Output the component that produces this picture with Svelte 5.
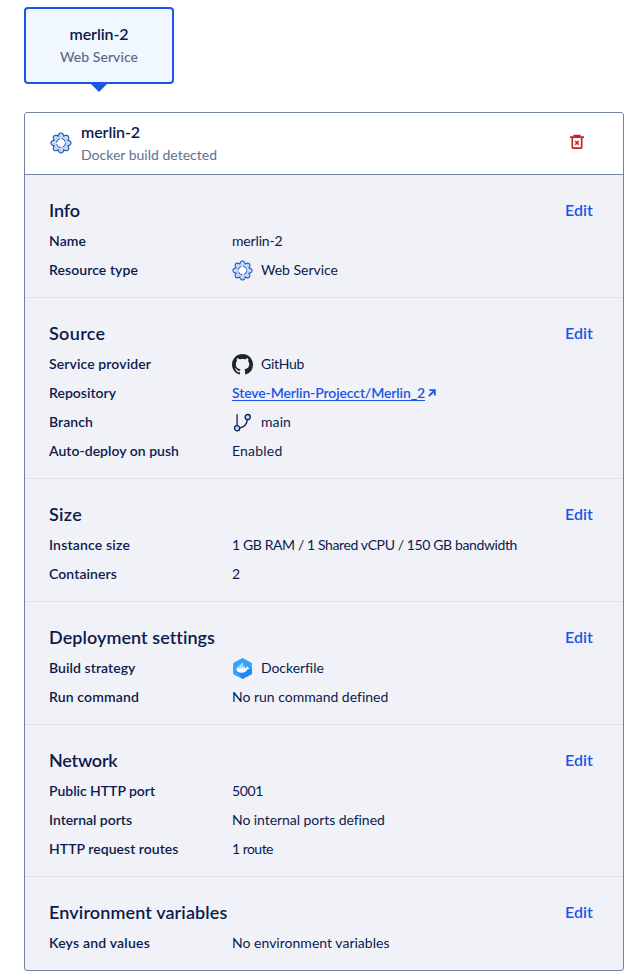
<script>
  const sections = [
    { title: 'Info', tw: 31, rows: [
      { label: 'Name', lw: 37, value: 'merlin-2', vw: 50.5 },
      { label: 'Resource type', lw: 89, value: 'Web Service', vw: 77, icon: 'gear' }
    ] },
    { title: 'Source', tw: 56.5, rows: [
      { label: 'Service provider', lw: 102, value: 'GitHub', vw: 43, icon: 'github' },
      { label: 'Repository', lw: 67, value: 'Steve-Merlin-Projecct/Merlin_2', vw: 193, link: true },
      { label: 'Branch', lw: 44, value: 'main', vw: 30, icon: 'branch' },
      { label: 'Auto-deploy on push', lw: 130, value: 'Enabled', vw: 50.5 }
    ] },
    { title: 'Size', tw: 33, rows: [
      { label: 'Instance size', lw: 81, value: '1 GB RAM / 1 Shared vCPU / 150 GB bandwidth', vw: 285 },
      { label: 'Containers', lw: 68, value: '2', vw: 8 }
    ] },
    { title: 'Deployment settings', tw: 165.5, rows: [
      { label: 'Build strategy', lw: 86.5, value: 'Dockerfile', vw: 62.5, icon: 'docker' },
      { label: 'Run command', lw: 90, value: 'No run command defined', vw: 156 }
    ] },
    { title: 'Network', tw: 68.5, rows: [
      { label: 'Public HTTP port', lw: 106, value: '5001', vw: 31 },
      { label: 'Internal ports', lw: 83, value: 'No internal ports defined', vw: 152.5 },
      { label: 'HTTP request routes', lw: 129.5, value: '1 route', vw: 41 }
    ] },
    { title: 'Environment variables', tw: 178.5, rows: [
      { label: 'Keys and values', lw: 101, value: 'No environment variables', vw: 157.5 }
    ] }
  ];

  // Tracks the text out or in so that it spans the given width.
  function fit(node, width) {
    const natural = node.getBoundingClientRect().width;
    const spacing = (width - natural) / node.textContent.length;
    node.style.letterSpacing = `${spacing.toFixed(3)}px`;
  }

  // Outline of the eight-lobed cog: round lobes with notches between.
  const cog = Array.from({ length: 128 }, (_, i) => {
    const a = (i / 128) * Math.PI * 2;
    const r = 7.2 + 2.8 * Math.pow(Math.abs(Math.cos(4 * a)), 0.85);
    return `${(11 + r * Math.sin(a)).toFixed(2)},${(11 - r * Math.cos(a)).toFixed(2)}`;
  }).join(' ');
</script>

{#snippet gear(size)}
  <svg width={size} height={size} viewBox="0 0 22 22" aria-hidden="true">
    <polygon points={cog} fill="#c0d9fb" stroke="#2450b0" stroke-width="1.1" stroke-linejoin="round" />
    <circle cx="11" cy="11" r="4.5" fill="#fff" stroke="#2450a8" stroke-width="1" stroke-dasharray="5.4 1.67" />
  </svg>
{/snippet}

<main>
  <div class="tab">
    <strong><span use:fit={59}>merlin-2</span></strong>
    <small><span use:fit={78}>Web Service</span></small>
  </div>

  <div class="card">
    <header>
      <span class="gear">{@render gear(22)}</span>
      <div class="heading">
        <strong><span use:fit={59}>merlin-2</span></strong>
        <small><span use:fit={136}>Docker build detected</span></small>
      </div>
      <svg class="trash" width="14" height="16" viewBox="0 0 14 16" fill="none" stroke="#cf2020" aria-hidden="true">
        <path d="M0 3.1h14M4.3 2.7V1.6h5.4v1.1" stroke-width="1.7" />
        <path d="M2.3 3.5v9.7q0 1 1 1h7.4q1 0 1-1V3.5" stroke-width="1.7" />
        <path d="M5.2 7l3.6 3.8M8.8 7L5.2 10.8" stroke-width="1.6" />
      </svg>
    </header>

    {#each sections as section}
      <section>
        <div class="title">
          <h2><span use:fit={section.tw}>{section.title}</span></h2>
          <a class="edit" href="#edit"><span use:fit={28}>Edit</span></a>
        </div>
        {#each section.rows as row}
          <div class="row">
            <div class="label"><span use:fit={row.lw}>{row.label}</span></div>
            <div class="value">
              {#if row.icon}
                <span class="icon">
                  {#if row.icon === 'gear'}
                    {@render gear(21)}
                  {:else if row.icon === 'github'}
                    <svg width="21" height="21" viewBox="0 0 16 16" aria-hidden="true">
                      <path fill="#20242c" d="M8 0C3.58 0 0 3.58 0 8c0 3.54 2.29 6.53 5.47 7.59.4.07.55-.17.55-.38 0-.19-.01-.82-.01-1.49-2.01.37-2.53-.49-2.69-.94-.09-.23-.48-.94-.82-1.13-.28-.15-.68-.52-.01-.53.63-.01 1.08.58 1.23.82.72 1.21 1.87.87 2.33.66.07-.52.28-.87.51-1.07-1.78-.2-3.64-.89-3.64-3.95 0-.87.31-1.59.82-2.15-.08-.2-.36-1.02.08-2.12 0 0 .67-.21 2.2.82.64-.18 1.32-.27 2-.27s1.36.09 2 .27c1.53-1.04 2.2-.82 2.2-.82.44 1.1.16 1.92.08 2.12.51.56.82 1.27.82 2.15 0 3.07-1.87 3.75-3.65 3.95.29.25.54.73.54 1.48 0 1.07-.01 1.93-.01 2.2 0 .21.15.46.55.38A8.01 8.01 0 0 0 16 8c0-4.42-3.58-8-8-8Z" />
                    </svg>
                  {:else if row.icon === 'branch'}
                    <svg width="21" height="21" viewBox="0 0 21 21" fill="none" stroke="#0c2050" stroke-width="1.3" aria-hidden="true">
                      <path d="M5.1 2.2v11.2M15.3 7.900C14.900 11.900 12.300 14.900 8 15.900" />
                      <circle cx="5.1" cy="16.200" r="2.6" fill="#c5dcfb" />
                      <circle cx="15.700" cy="5.100" r="2.6" fill="#c5dcfb" />
                    </svg>
                  {:else}
                    <svg width="21" height="21" viewBox="-.5 .5 21 21" aria-hidden="true">
                      <path d="M10 .5l8.5 4.6q.9.5.9 1.5v8.8q0 1-.9 1.5L10 21.5l-8.500-4.600q-.9-.5-.9-1.500V6.600q0-1 .9-1.500z" fill="#35a2fb" />
                      <path d="M16.500 9.500l2.900 2.300v3.600q0 1-.9 1.500L10 21.500 5 14.500z" fill="#1f88f5" />
                      <path d="M3.800 10.800h9.900q.8-.4.5-1.300l.6-.8q.9.6.9 1.500 1-.1 1.500.4-.6 1.200-2.200 1.200-1.500 3.400-6 3.400-5 0-5.200-4.400z" fill="#fff" />
                      <path d="M5 9h1.700v1.500H5zM7 9h1.700v1.500H7zM9 9h1.700v1.500H9zM11 9h1.700v1.500H11zM7 7.300h1.700v1.300H7zM9 7.300h1.700v1.300H9zM9 5.700h1.700v1.200H9z" fill="#e9f5ff" />
                    </svg>
                  {/if}
                </span>
              {/if}
              {#if row.link}
                <a class="repo" href="#repository"><span use:fit={row.vw}>{row.value}</span></a>
                <svg class="out" width="8" height="8" viewBox="0 0 8 8" fill="none" stroke="#1558e8" stroke-width="1.8" aria-hidden="true">
                  <path d="M.8 7.2L6.5 1.5M1.500 1.200h5.300v5.300" />
                </svg>
              {:else}
                <span use:fit={row.vw}>{row.value}</span>
              {/if}
            </div>
          </div>
        {/each}
      </section>
    {/each}
  </div>
</main>

<style>
  :global(body) { background: #fff; }
  main {
    box-sizing: border-box;
    width: 640px;
    height: 979px;
    padding: 7px 16px 0 24px;
    overflow: hidden;
    color: #0c1b4d;
    font: 14px/20px Lato, "Open Sans", sans-serif;
    white-space: nowrap;
  }
  .tab {
    position: relative;
    display: flex;
    flex-direction: column;
    align-items: center;
    box-sizing: border-box;
    width: 150px;
    height: 77px;
    padding-top: 13px;
    border: 2px solid #1a56e8;
    border-radius: 4px;
    background: #f0f7ff;
  }
  .tab::after {
    content: "";
    position: absolute;
    top: 75px;
    left: 65px;
    border: 8px solid transparent;
    border-top-color: #1a56e8;
    border-bottom: 0;
  }
  strong {
    display: block;
    font-size: 16px;
    line-height: 23px;
    font-weight: 600;
  }
  small {
    display: block;
    font-size: 14px;
    line-height: 23px;
    color: #63708f;
  }
  .tab small { font-weight: 500; color: #5b6789; }
  .card {
    box-sizing: border-box;
    width: 600px;
    margin-top: 28px;
    border: 1px solid #7582a8;
    border-radius: 3px;
    background: #f1f2f8;
    overflow: hidden;
  }
  header {
    display: flex;
    align-items: center;
    box-sizing: border-box;
    height: 62px;
    padding: 0 39px 2px 25px;
    border-bottom: 1px solid #7582a8;
    background: #fff;
  }
  .gear { display: flex; width: 31px; }
  .heading { flex: 1; }
  .trash { margin-bottom: 2px; }
  section {
    padding: 23px 30px 13px 24px;
    border-bottom: 1px solid #dfe2ec;
  }
  section:last-child { border-bottom: 0; }
  .title {
    display: flex;
    justify-content: space-between;
    align-items: center;
    height: 23px;
    margin-bottom: 5px;
  }
  h2 {
    margin: 2px 0 0;
    font-size: 18px;
    line-height: 23px;
    font-weight: 600;
  }
  a { color: #1a56e8; }
  .edit {
    font-size: 16px;
    line-height: 23px;
    font-weight: 600;
    text-decoration: none;
  }
  .row {
    display: flex;
    align-items: center;
    height: 29px;
  }
  .label { width: 183px; font-weight: 600; }
  .value { display: flex; align-items: center; }
  .icon { display: flex; align-items: center; width: 29px; margin-top: 2px; }
  .repo {
    font-weight: 600;
    text-decoration: underline;
    text-decoration-skip-ink: none;
    text-underline-offset: 2px;
  }
  .out { margin-left: 3px; }
</style>
